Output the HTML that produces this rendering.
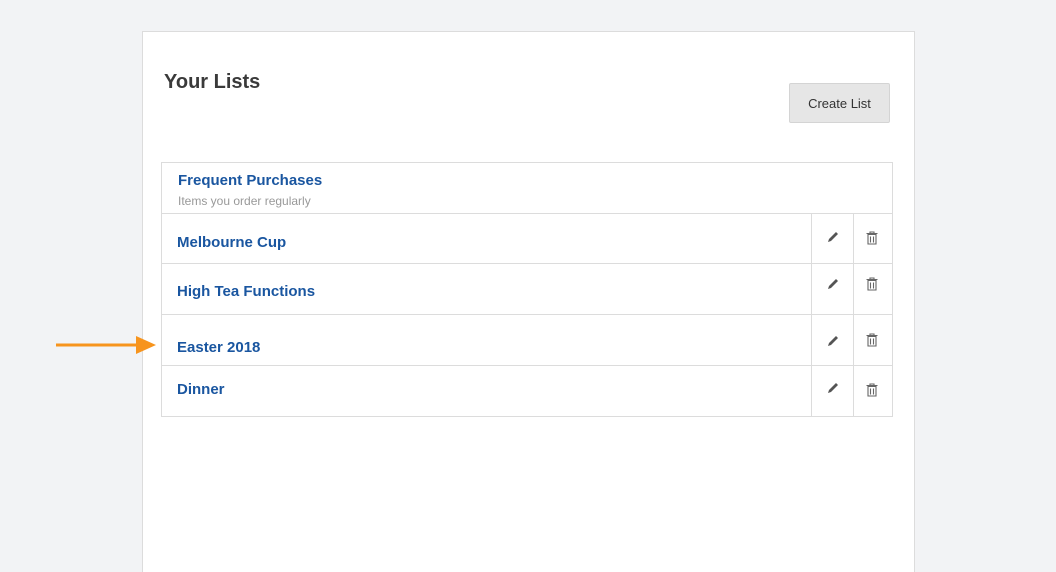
<html><head><style>
html,body{margin:0;width:1056px;height:572px;overflow:hidden}
body{background:#f2f3f5;font-family:"Liberation Sans",sans-serif;position:relative}
.panel{position:absolute;left:142px;top:31px;width:771px;height:560px;background:#fff;border:1px solid #dcdcdc}
.t{position:absolute;left:164px;top:71px;font-size:20px;font-weight:bold;color:#3a3a3a}
.btn{position:absolute;left:789px;top:83px;width:99px;height:38px;background:#e6e6e6;border:1px solid #d4d4d4;border-radius:2px;font-size:13px;color:#333;text-align:center;line-height:40px}
.tbl{position:absolute;left:161px;top:162px;width:730px;border:1px solid #dcdcdc;border-bottom:none}
.r{position:relative;border-bottom:1px solid #dcdcdc;height:50px}
.n{position:absolute;left:15px;font-size:15px;font-weight:bold;color:#1a56a0}
.c{position:absolute;top:0;bottom:0;border-left:1px solid #dcdcdc;width:41px}
.c svg{position:absolute;left:14px;top:16px}
.c.d svg{left:10px}
</style></head><body>
<div class="panel"></div>
<div class="t">Your Lists</div>
<div class="btn">Create List</div>
<div class="tbl">
<div class="r"><div class="n" style="left:16px;top:9px">Frequent Purchases</div><div style="position:absolute;left:16px;top:31px;font-size:12px;color:#999">Items you order regularly</div></div>
<div class="r" style="height:49px"><div class="n" style="top:20px">Melbourne Cup</div><div class="c" style="left:649px"><svg width="14" height="14"><path d="M2 12l1-3 7-7 2 2-7 7z" fill="#555"/></svg></div><div class="c d" style="left:691px"><svg width="16" height="16"><path d="M2.5 3.5h11M6 3.5V2h4v1.5M4 4.5h8v9.5H4z M6.5 6.5v6M9.5 6.5v6" fill="none" stroke="#666" stroke-width="1.1"/></svg></div></div>
<div class="r"><div class="n" style="top:19px">High Tea Functions</div><div class="c" style="left:649px"><svg width="14" height="14" style="top:13px"><path d="M2 12l1-3 7-7 2 2-7 7z" fill="#555"/></svg></div><div class="c d" style="left:691px"><svg width="16" height="16" style="top:12px"><path d="M2.5 3.5h11M6 3.5V2h4v1.5M4 4.5h8v9.5H4z M6.5 6.5v6M9.5 6.5v6" fill="none" stroke="#666" stroke-width="1.1"/></svg></div></div>
<div class="r"><div class="n" style="top:24px">Easter 2018</div><div class="c" style="left:649px"><svg width="14" height="14" style="top:19px"><path d="M2 12l1-3 7-7 2 2-7 7z" fill="#555"/></svg></div><div class="c d" style="left:691px"><svg width="16" height="16" style="top:17px"><path d="M2.5 3.5h11M6 3.5V2h4v1.5M4 4.5h8v9.5H4z M6.5 6.5v6M9.5 6.5v6" fill="none" stroke="#666" stroke-width="1.1"/></svg></div></div>
<div class="r"><div class="n" style="top:15px">Dinner</div><div class="c" style="left:649px"><svg width="14" height="14" style="top:15px"><path d="M2 12l1-3 7-7 2 2-7 7z" fill="#555"/></svg></div><div class="c d" style="left:691px"><svg width="16" height="16" style="top:16px"><path d="M2.5 3.5h11M6 3.5V2h4v1.5M4 4.5h8v9.5H4z M6.5 6.5v6M9.5 6.5v6" fill="none" stroke="#666" stroke-width="1.1"/></svg></div></div>
</div>
<svg style="position:absolute;left:55px;top:335px" width="104" height="20"><path d="M1 10H84" stroke="#f7941d" stroke-width="3"/><path d="M81 1L101 10L81 19z" fill="#f7941d"/></svg>
</body></html>
